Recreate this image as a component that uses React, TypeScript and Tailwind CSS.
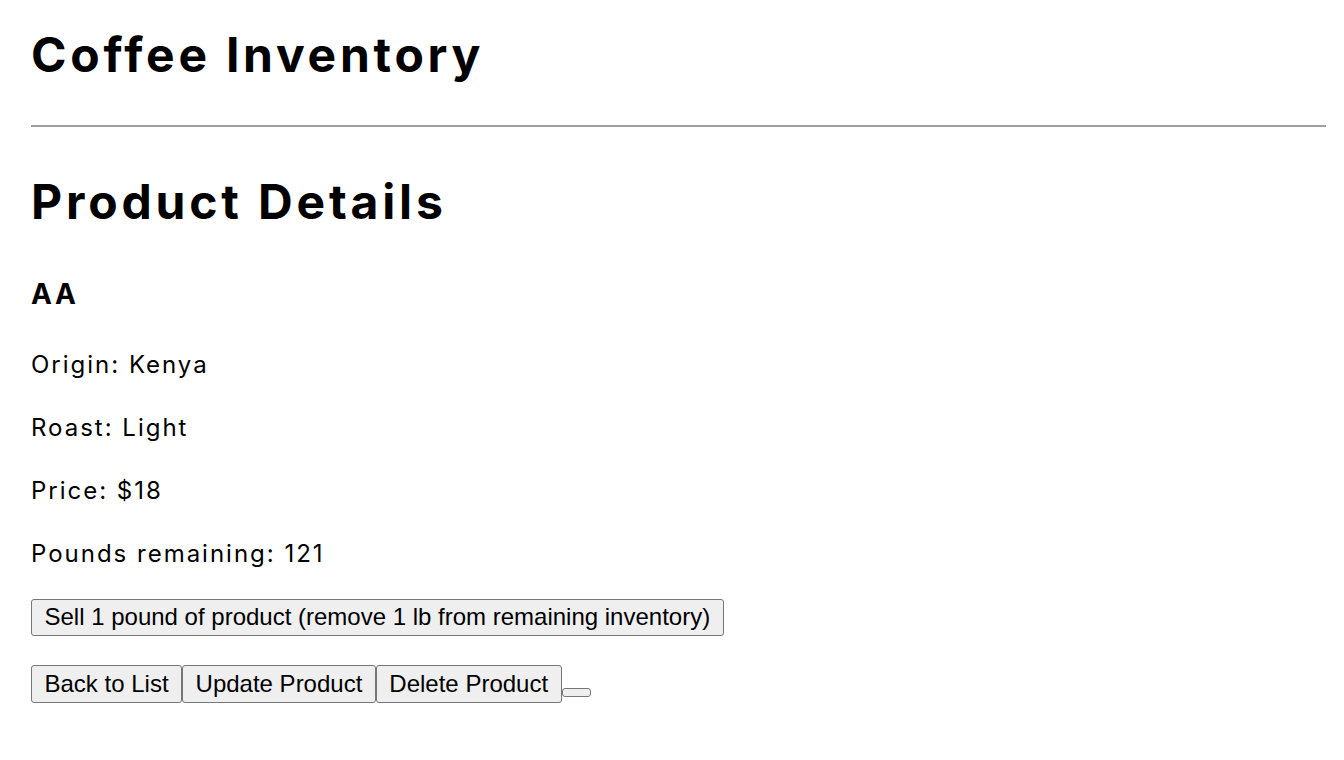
export default function App() {
  const btn =
    "box-border border border-[#767676] rounded-[3px] bg-[#efefef] px-[12.5px] text-[24px] leading-[28px] text-black font-['Liberation_Sans',Arial,sans-serif] whitespace-nowrap";
  return (
    <div className="min-h-[760px] bg-white text-black font-['Inter',sans-serif] pl-[31px] pr-[18px] pt-[26px]">
      <h1 className="text-[48px] leading-[58px] font-bold tracking-[0.078em]">Coffee Inventory</h1>
      <div className="mt-[41px] h-[2px] bg-[#a0a0a0]" />
      <h2 className="mt-[46px] text-[48px] leading-[58px] font-bold tracking-[0.08em]">Product Details</h2>
      <h3 className="mt-[46px] text-[28px] leading-[34px] font-bold tracking-[0.1em]">AA</h3>
      <div className="mt-[39px] flex flex-col gap-[34px] text-[24px] leading-[29px] tracking-[0.083em]">
        <p>Origin: Kenya</p>
        <p>Roast: Light</p>
        <p>Price: $18</p>
        <p>Pounds remaining: 121</p>
      </div>
      <div className="mt-[31px] flex">
        <button className={`${btn} h-[37px] pt-[3px] pb-[4px]`}>
          Sell 1 pound of product (remove 1 lb from remaining inventory)
        </button>
      </div>
      <div className="mt-[29px] flex items-start">
        <button className={`${btn} h-[38px] pt-[4px] pb-[4px]`}>Back to List</button>
        <button className={`${btn} h-[38px] pt-[4px] pb-[4px]`}>Update Product</button>
        <button className={`${btn} h-[38px] pt-[4px] pb-[4px]`}>Delete Product</button>
        <button className="mt-[23px] w-[29px] h-[9px] box-border border border-[#767676] rounded-[3px] bg-[#efefef]" />
      </div>
    </div>
  );
}
